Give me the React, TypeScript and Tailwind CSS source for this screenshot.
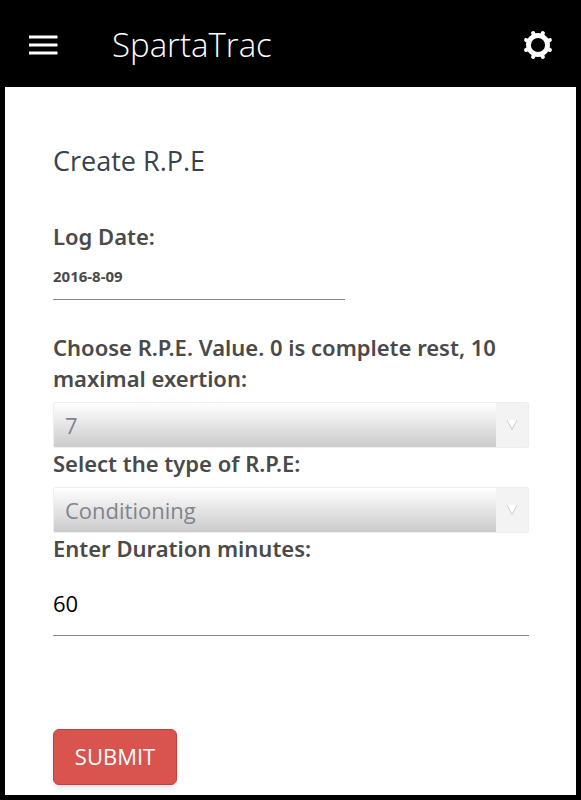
import React from "react";

const values = ["0", "1", "2", "3", "4", "5", "6", "7", "8", "9", "10"];
const types = ["Conditioning", "Strength", "Practice", "Game"];

const labelClass = "block font-['Noto_Sans',sans-serif] text-[22px] leading-[31px] font-semibold text-[#4a4a4a]";

function SelectField({ id, label, items, value }: { id: string; label: string; items: string[]; value: string }) {
  return (
    <div>
      <label htmlFor={id} className={labelClass}>
        {label}
      </label>
      <div className="mt-2 grid h-[46px] grid-cols-[1fr_32px] overflow-hidden rounded-xs border border-[#eeeeee] bg-[#f3f3f3]">
        <select
          id={id}
          defaultValue={value}
          className="col-span-2 col-start-1 row-start-1 h-full w-full appearance-none bg-linear-to-b from-white to-[#cbcbcb] px-[11px] text-[22px] text-[#7f858e] outline-none"
        >
          {items.map((item) => (
            <option key={item}>{item}</option>
          ))}
        </select>
        <span className="pointer-events-none z-10 col-start-2 row-start-1 flex items-center justify-center bg-[#f3f3f3]">
          <svg width="12" height="12" viewBox="0 0 12 12" fill="white" stroke="#cccccc" strokeWidth="1">
            <path d="M1 1 6 10.500 11 1" />
          </svg>
        </span>
      </div>
    </div>
  );
}

export default function App() {
  return (
    <div className="flex min-h-screen flex-col bg-black font-['Open_Sans',sans-serif]">
      <header className="flex h-[87px] items-center px-7 pt-0.5 text-white">
        <button aria-label="Menu" className="w-[84px]">
          <svg width="30" height="20" viewBox="0 0 30 20" stroke="currentColor" strokeWidth="3">
            <path d="M1 2H29.500M1 10H29.500M1 18H29.500" />
          </svg>
        </button>
        <h1 className="flex-1 text-[33px] leading-[46px] font-light">SpartaTrac</h1>
        <button aria-label="Settings">
          <svg width="30" height="30" viewBox="-15 -15 30 30" fill="none" stroke="currentColor" strokeLinecap="round">
            <circle r="9.500" strokeWidth="4.800" />
            <path
              strokeWidth="4"
              d="M4.100 -9.900L4.900 -11.900M9.900 -4.100L11.900 -4.900M9.900 4.100L11.900 4.900M4.100 9.900L4.900 11.900M-4.100 9.900L-4.900 11.900M-9.900 4.100L-11.900 4.900M-9.900 -4.100L-11.900 -4.900M-4.100 -9.900L-4.900 -11.900"
            />
          </svg>
        </button>
      </header>
      <main className="mx-[5px] mb-[5px] flex-1 bg-white pr-[47px] pb-[10px] pl-12">
        <form onSubmit={(e) => e.preventDefault()}>
          <h2 className="pt-14 text-[27px] leading-9 text-[#37424b]">Create R.P.E</h2>
          <div className="mt-[42px]">
            <label htmlFor="date" className={labelClass}>
              Log Date:
            </label>
            <input
              id="date"
              defaultValue="2016-8-09"
              className="h-12 w-[292px] border-b border-[#888888] font-['Noto_Sans',sans-serif] text-[15px] font-bold text-[#4a4a4a] outline-none"
            />
          </div>
          <div className="mt-8">
            <SelectField id="value" label="Choose R.P.E. Value. 0 is complete rest, 10 maximal exertion:" items={values} value="7" />
            <SelectField id="type" label="Select the type of R.P.E:" items={types} value="Conditioning" />
          </div>
          <label htmlFor="duration" className={labelClass}>
            Enter Duration minutes:
          </label>
          <input
            id="duration"
            defaultValue="60"
            className="mt-2 h-16 w-full border-b border-[#888888] pb-0.5 text-[22px] text-black outline-none"
          />
          <button
            type="submit"
            className="mt-[93px] block h-14 w-[124px] rounded-md border border-[#c0413e] bg-[#d9534f] pb-0.5 text-[22px] text-white shadow-md"
          >
            SUBMIT
          </button>
        </form>
      </main>
    </div>
  );
}
